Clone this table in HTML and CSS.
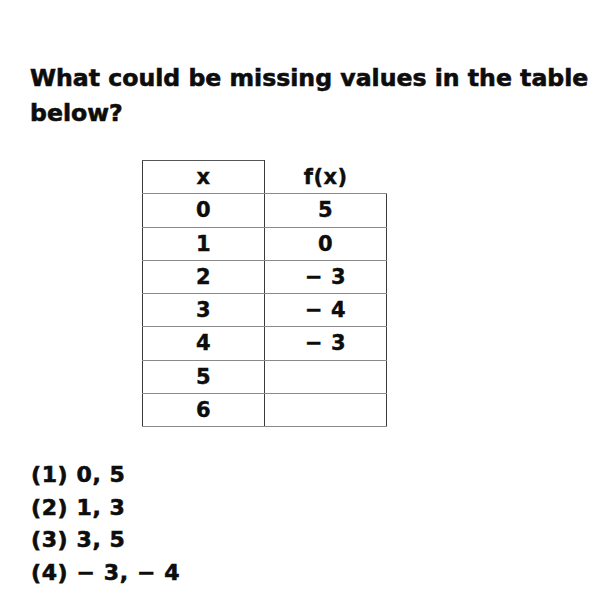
FILE: index.html
```html
<!DOCTYPE html>
<html>
<head>
<meta charset="utf-8">
<link rel="stylesheet" href="styles.css">
</head>
<body>
<div class="page">
  <h1 class="question">What could be missing values in the table below?</h1>
  <table class="values">
    <tr><td class="head-x">x</td><td class="head-f">f(x)</td></tr>
    <tr><td>0</td><td>5</td></tr>
    <tr><td>1</td><td>0</td></tr>
    <tr><td>2</td><td>− 3</td></tr>
    <tr><td>3</td><td>− 4</td></tr>
    <tr><td>4</td><td>− 3</td></tr>
    <tr><td>5</td><td></td></tr>
    <tr><td>6</td><td></td></tr>
  </table>
  <ol class="choices">
    <li>(1) 0, 5</li>
    <li>(2) 1, 3</li>
    <li>(3) 3, 5</li>
    <li>(4) − 3, − 4</li>
  </ol>
</div>
</body>
</html>
```
FILE: styles.css
```css
html, body {
  margin: 0;
  padding: 0;
  background: #ffffff;
}
.page {
  width: 612px;
  height: 613px;
  padding: 61px 0 0 30px;
  box-sizing: border-box;
  font-family: "DejaVu Sans", Verdana, sans-serif;
  font-weight: bold;
  color: #0d0d0d;
  -webkit-text-stroke: 0.6px #0d0d0d;
}
.question {
  margin: 0;
  font-size: 23.6px;
  line-height: 35px;
  font-weight: bold;
  width: 575px;
}
.values {
  border-collapse: collapse;
  margin: 29px 0 0 112px;
  font-size: 21px;
  letter-spacing: 0.5px;
}
.values td {
  width: 121px;
  height: 32.25px;
  padding: 0;
  text-align: center;
  vertical-align: middle;
  border-top: 1px solid #8a8a8a;
  border-bottom: 1px solid #8a8a8a;
  border-left: 1px solid #3a3a3a;
  border-right: 1px solid #3a3a3a;
  line-height: 22px;
  -webkit-text-stroke: 0.4px #0d0d0d;
}
.values td.head-x {
  border-top: 1px solid #555555;
}
.values td.head-f {
  border-top: none;
  border-right: none;
}
.choices {
  list-style: none;
  margin: 32px 0 0 1px;
  padding: 0;
  font-size: 22px;
  line-height: 32.7px;
  letter-spacing: 0.6px;
}
```
